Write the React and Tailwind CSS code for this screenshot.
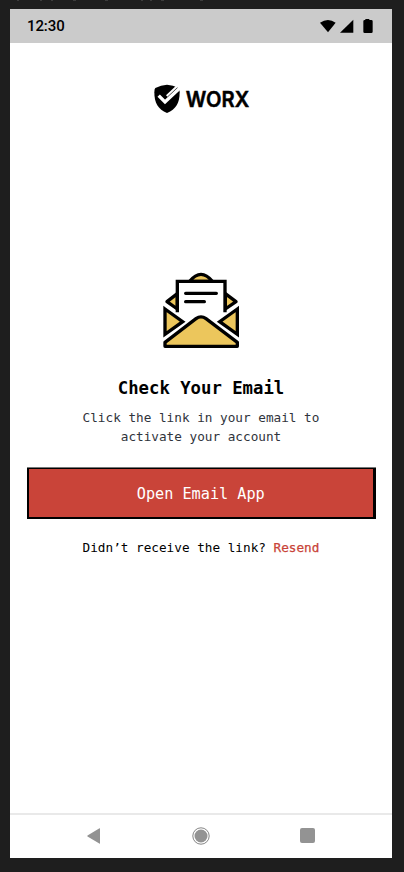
import React from "react";

const MONO = "font-['DejaVu_Sans_Mono','Liberation_Mono',monospace]";

function StatusBar() {
  return (
    <div className="flex h-[34px] shrink-0 items-center justify-between bg-[#cbcbcb] pr-[19px] pl-[17px]">
      <span className="font-[Roboto,sans-serif] text-[15px] leading-[18px] font-medium tracking-[-0.1px] text-black">12:30</span>
      <svg width="53" height="15" viewBox="0 0 159 45">
        <path d="M0 11Q24-5 47 11L24 40Z" />
        <path d="M60 41L100 2V41Z" />
        <path d="M136 3V0H148V3H154Q158 3 158 7V38Q158 42 154 42H134Q130 42 130 38V7Q130 3 134 3Z" />
      </svg>
    </div>
  );
}

function Logo() {
  return (
    <div className="mt-[41px] flex h-[30px] items-center gap-[5px] pl-[144px]">
      <svg width="27" height="30" viewBox="0 0 81 90">
        <path d="M39 2Q57 3 74 12Q77 14 77 25C77 57 66 76 39 87C12 76 1 57 1 25Q1 14 4 12Q21 3 39 2Z" />
        <path d="M14 35L33 54L80 10" fill="none" stroke="#fff" strokeWidth="10" />
        <path d="M38 36L70 6" fill="none" stroke="#fff" strokeWidth="6" />
      </svg>
      <svg width="64" height="20" viewBox="0 0 64 20" className="overflow-visible">
        <text
          x="-0.3"
          y="17.7"
          textLength="63.5"
          lengthAdjust="spacingAndGlyphs"
          stroke="#000"
          strokeWidth="0.5"
          className="font-[Inter,Roboto,sans-serif] text-[21.7px] font-semibold"
        >
          WORX
        </text>
      </svg>
    </div>
  );
}

function Envelope() {
  return (
    <svg width="100" height="100" viewBox="0 0 300 300" className="block" stroke="#000" strokeWidth="10" strokeLinejoin="round" strokeLinecap="round">
      <path d="M119 64Q153 22 187 64Z" fill="#ecc65c" />
      <path d="M82 101L51 125L82 147Z" fill="#ecc65c" />
      <path d="M226 101L258 125L226 147Z" fill="#ecc65c" />
      <path d="M82 157V64H225V157" fill="#fff" strokeLinecap="butt" strokeLinejoin="miter" />
      <path d="M107 100H199M107 125H163" fill="none" />
      <path d="M45 147L98 185L45 223Z" fill="#ecc65c" strokeLinejoin="miter" />
      <path d="M262 147L209 185L262 223Z" fill="#ecc65c" strokeLinejoin="miter" />
      <path d="M45 259V247L138 176Q153 165 168 176L262 247V259Z" fill="#ecc65c" />
    </svg>
  );
}

function NavBar() {
  return (
    <div className="mt-auto flex h-[45px] shrink-0 items-center justify-between border-t-2 border-[#e9e9e9] px-[77px] pb-[2px]">
      <svg width="14" height="16" viewBox="0 0 14 16" fill="#939393">
        <path d="M12.5.3Q13 0 13 .8V15.2Q13 16 12.3 15.6L.5 8.5Q0 8 .5 7.5Z" />
      </svg>
      <svg width="18" height="18" viewBox="0 0 18 18" fill="#939393">
        <circle cx="9" cy="9" r="6.5" />
        <circle cx="9" cy="9" r="8.2" fill="none" stroke="#858585" />
      </svg>
      <div className="size-[15px] rounded-[2px] bg-[#939393]" />
    </div>
  );
}

// Descenders of the frame's caption, cut off by the canvas edge.
function CaptionEdge() {
  return (
    <svg width="230" height="9" viewBox="0 0 230 9" className="block" stroke="#3c3c3c">
      <path d="M17 .5h2M40 .5h2M51 .5h2M73 .5h3M105 .5h3M141 .5h2M150 .5h2M161 .5h3M200 .5h3" />
    </svg>
  );
}

export default function App() {
  return (
    <div className="h-[872px] w-[404px] overflow-hidden bg-[#1e1e1e]">
      <CaptionEdge />
      <div className="ml-[10px] flex h-[849px] w-[382px] flex-col bg-white">
        <StatusBar />
        <Logo />
        <div className="mt-[146px] flex flex-col items-center">
          <div className="self-start pl-[140px]">
            <Envelope />
          </div>
          <h1 className={`${MONO} mt-[16px] text-[17.3px] leading-[24px] font-bold text-black`}>Check Your Email</h1>
          <p className={`${MONO} mt-[8px] text-center text-[12.7px] leading-[19px] text-[#30343c]`}>
            Click the link in your email to
            <br />
            activate your account
          </p>
        </div>
        <div className="mt-[21px] ml-[17px] h-[52px] w-[349px] shrink-0 border-t border-[#777] bg-black pt-px pr-[3px] pb-[2px] pl-[1.5px]">
          <button className={`${MONO} block h-[48px] w-full bg-[#c94439] pt-[2px] text-[15.2px] text-white`}>Open Email App</button>
        </div>
        <p className={`${MONO} mt-[19px] text-center text-[12.7px] leading-[20px] text-black`}>
          Didn’t receive the link? <a className="text-[#c94439] [-webkit-text-stroke:0.25px_#c94439]">Resend</a>
        </p>
        <NavBar />
      </div>
    </div>
  );
}
